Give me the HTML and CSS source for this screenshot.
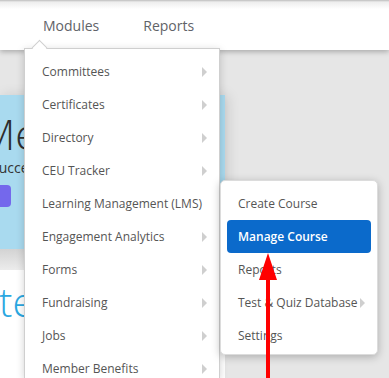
FILE: index.html
```html
<!DOCTYPE html>
<html lang="en">
<head>
    <meta charset="UTF-8">
    <meta name="viewport" content="width=device-width, initial-scale=1.0">
    <title>Modules menu</title>
    <link rel="stylesheet" href="styles.css">
</head>
<body>
    <header class="topbar">
        <nav class="nav">
            <a href="#" class="nav-link nav-active">Modules</a>
            <a href="#" class="nav-link">Reports</a>
        </nav>
    </header>

    <div class="page">
        <div class="column">
            <div class="banner">
                <h1 class="banner-title">Me</h1>
                <p class="banner-text">Succe</p>
                <a href="#" class="banner-btn"></a>
            </div>
            <div class="band"></div>
            <div class="content">
                <h2 class="content-title">te</h2>
            </div>
        </div>
    </div>

    <ul class="dropdown">
        <li class="item">Committees <span class="caret"></span></li>
        <li class="item">Certificates <span class="caret"></span></li>
        <li class="item">Directory <span class="caret"></span></li>
        <li class="item">CEU Tracker <span class="caret"></span></li>
        <li class="item">Learning Management (LMS)</li>
        <li class="item">Engagement Analytics <span class="caret"></span></li>
        <li class="item">Forms <span class="caret"></span></li>
        <li class="item">Fundraising <span class="caret"></span></li>
        <li class="item">Jobs <span class="caret"></span></li>
        <li class="item">Member Benefits <span class="caret"></span></li>
    </ul>

    <ul class="submenu">
        <li class="sub-item">Create Course</li>
        <li class="sub-item sub-active">Manage Course</li>
        <li class="sub-item">Reports</li>
        <li class="sub-item">Test &amp; Quiz Database <span class="caret caret-tight"></span></li>
        <li class="sub-item">Settings</li>
    </ul>

    <svg class="pointer" width="24" height="125" viewBox="0 0 24 125">
        <polygon points="12,0 3,27 21,27" fill="#ff0000"/>
        <rect x="10" y="24" width="4" height="101" fill="#ff0000"/>
    </svg>
</body>
</html>
```

FILE: styles.css
```css
body {
    margin: 0;
    height: 378px;
    background-color: #e6e6e6;
    font-family: "Open Sans", sans-serif;
    overflow: hidden;
}

.topbar {
    height: 50px;
    background: linear-gradient(#bdbdbd 0, #ededed 2px, #fff 9px);
    box-shadow: 0 2px 5px rgba(0, 0, 0, 0.25);
    position: relative;
    z-index: 1;
}

.nav {
    display: flex;
    align-items: center;
    height: 50px;
    padding-left: 43px;
    gap: 44px;
}

.nav-link {
    color: #5f6368;
    text-decoration: none;
    font-size: 14px;
}

.page {
    padding-top: 45px;
}

.column {
    width: 225px;
}

.banner {
    height: 154px;
    padding-top: 15px;
    box-sizing: border-box;
    background-color: #a9daef;
    box-shadow: 3px 0 12px rgba(0, 0, 0, 0.12);
    overflow: hidden;
}

.banner-title {
    margin: 0;
    font-size: 42px;
    line-height: 48px;
    font-weight: 300;
    color: #2d2d2d;
    text-indent: -21px;
}

.banner-text {
    margin: 0;
    font-size: 14px;
    line-height: 20px;
    color: #333;
    text-indent: -9px;
}

.banner-btn {
    display: block;
    margin-top: 7px;
    margin-left: -60px;
    width: 71px;
    height: 22px;
    border-radius: 4px;
    background-color: #7468ec;
}

.band {
    height: 21px;
    background: linear-gradient(#d3d3d3, #ececec);
}

.content {
    height: 110px;
    padding-top: 8px;
    background-color: #fff;
}

.content-title {
    margin: 0;
    font-size: 40px;
    line-height: 48px;
    font-weight: 300;
    color: #2aa7e1;
    text-indent: -1px;
}

.dropdown {
    position: absolute;
    left: 24px;
    top: 48px;
    width: 196px;
    height: 330px;
    margin: 0;
    padding: 6px 0 0;
    list-style: none;
    box-sizing: border-box;
    background-color: #fff;
    border: 1px solid #cfcfcf;
    border-bottom: 0;
    box-shadow: 0 2px 8px rgba(0, 0, 0, 0.18);
    overflow: visible;
    z-index: 2;
}

.dropdown::before {
    content: "";
    position: absolute;
    left: 9px;
    top: -7px;
    width: 10px;
    height: 10px;
    background-color: #fff;
    border-left: 1px solid #cfcfcf;
    border-top: 1px solid #cfcfcf;
    transform: rotate(45deg);
}

.item {
    display: flex;
    align-items: center;
    justify-content: space-between;
    height: 33px;
    padding: 0 12px 0 17px;
    font-size: 12px;
    color: #555;
}

.caret {
    width: 0;
    height: 0;
    border-top: 5px solid transparent;
    border-bottom: 5px solid transparent;
    border-left: 5px solid #cfcfcf;
}

.submenu {
    position: absolute;
    left: 220px;
    top: 180px;
    width: 158px;
    height: 175px;
    margin: 0;
    padding: 6px 6px 0;
    list-style: none;
    box-sizing: border-box;
    background-color: #fff;
    border: 1px solid #dcdcdc;
    border-radius: 5px;
    box-shadow: 0 2px 8px rgba(0, 0, 0, 0.25);
    z-index: 3;
}

.sub-item {
    display: flex;
    align-items: center;
    height: 33px;
    padding-left: 11px;
    font-size: 12px;
    color: #555;
}

.sub-active {
    background-color: #0b6acb;
    border-radius: 4px;
    color: #fff;
    font-weight: 600;
}

.caret-tight {
    margin-left: 2px;
}

.pointer {
    position: absolute;
    left: 256px;
    top: 253px;
    z-index: 4;
}
```
